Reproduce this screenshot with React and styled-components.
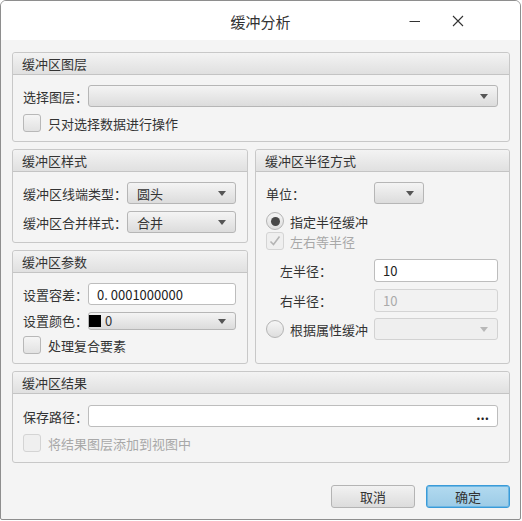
import React from 'react';
import styled, { createGlobalStyle } from 'styled-components';

const GlobalStyle = createGlobalStyle`
  body {
    margin: 0;
    background: #fff;
    font-family: "Noto Sans CJK SC", "Noto Sans", sans-serif;
    font-size: 13px;
    color: #333;
  }
`;

const Window = styled.div`
  box-sizing: border-box;
  width: 521px;
  height: 520px;
  border: 1px solid #8e8e8e;
  border-radius: 6px 6px 2px 2px;
  overflow: hidden;
  display: flex;
  flex-direction: column;
  background: #f4f4f4;
`;

const TitleBar = styled.div`
  height: 39px;
  background: #fff;
  display: grid;
  grid-template-columns: 1fr auto 1fr;
  align-items: center;
`;

const Title = styled.div`
  grid-column: 2;
  font-size: 15px;
  color: #333;
  padding-top: 1px;
`;

const Controls = styled.div`
  grid-column: 3;
  justify-self: end;
  display: flex;
  padding-right: 41px;
`;

const ControlButton = styled.div`
  width: 43px;
  height: 39px;
  display: flex;
  align-items: center;
  justify-content: center;
  color: #333;
`;

const Content = styled.div`
  flex: 1;
  display: flex;
  flex-direction: column;
  gap: 7px;
  padding: 12px 10px 0 11px;
`;

const Columns = styled.div`
  display: grid;
  grid-template-columns: 236px 1fr;
  gap: 7px;
`;

const Stack = styled.div`
  display: flex;
  flex-direction: column;
  gap: 7px;
`;

const Panel = styled.div`
  border: 1px solid #c8c8c8;
  border-radius: 3px;
  background: #f4f4f4;
  display: flex;
  flex-direction: column;
`;

const PanelHeader = styled.div`
  height: 21px;
  line-height: 21px;
  padding-left: 9px;
  border-bottom: 1px solid #c4c4c4;
  border-radius: 3px 3px 0 0;
  background: linear-gradient(#f3f3f3, #e0e0e0);
  color: #333;
`;

const PanelBody = styled.div`
  display: flex;
  flex-direction: column;
  gap: ${(p) => p.$gap ?? 7}px;
  padding: ${(p) => p.$top ?? 10}px 11px ${(p) => p.$bottom ?? 9}px 10px;
`;

const Row = styled.div`
  display: flex;
  align-items: center;
  height: ${(p) => p.$h ?? 22}px;
  margin-top: ${(p) => p.$mt ?? 0}px;
`;

const Label = styled.div`
  width: ${(p) => p.$w}px;
  flex: none;
  padding-left: ${(p) => p.$indent ?? 0}px;
  box-sizing: border-box;
  color: #333;
  white-space: nowrap;
`;

const OptionCell = styled.div`
  width: ${(p) => p.$w}px;
  flex: none;
  display: flex;
  align-items: center;
`;

const Combo = styled.div`
  box-sizing: border-box;
  position: relative;
  width: ${(p) => (p.$w ? `${p.$w}px` : 'auto')};
  flex: ${(p) => (p.$w ? 'none' : '1')};
  height: ${(p) => p.$h ?? 22}px;
  border: 1px solid ${(p) => (p.$disabled ? '#d2d2d2' : '#b6b6b6')};
  border-radius: 3px;
  background: ${(p) =>
    p.$disabled ? '#efefef' : 'linear-gradient(#f4f4f4, #dcdcdc)'};
  display: flex;
  align-items: center;
  padding-left: ${(p) => p.$pad ?? 9}px;
  color: #333;
  gap: 4px;

  &::after {
    content: '';
    position: absolute;
    right: 9px;
    top: 50%;
    margin-top: -2px;
    border-left: 4.5px solid transparent;
    border-right: 4.5px solid transparent;
    border-top: 5px solid ${(p) => (p.$disabled ? '#b8b8b8' : '#555')};
  }
`;

const Swatch = styled.span`
  width: 12px;
  height: 12px;
  background: #000;
`;

const Field = styled.div`
  box-sizing: border-box;
  flex: 1;
  height: ${(p) => p.$h ?? 22}px;
  border: 1px solid ${(p) => (p.$disabled ? '#d4d4d4' : '#bdbdbd')};
  border-radius: 3px;
  background: ${(p) => (p.$disabled ? '#f2f2f2' : '#fff')};
  color: ${(p) => (p.$disabled ? '#aaa' : '#222')};
  display: flex;
  align-items: center;
  justify-content: space-between;
  padding: 0 8px;
`;

const Dots = styled.span`
  font-weight: bold;
  letter-spacing: 0;
  color: #222;
  margin-top: -4px;
`;

const Check = styled.span`
  box-sizing: border-box;
  width: 18px;
  height: 18px;
  flex: none;
  border: 1px solid ${(p) => (p.$disabled ? '#d4d4d4' : '#b8b8b8')};
  border-radius: 3px;
  background: ${(p) =>
    p.$disabled ? '#efefef' : 'linear-gradient(#f5f5f5, #e2e2e2)'};
  display: flex;
  align-items: center;
  justify-content: center;
`;

const Radio = styled.span`
  box-sizing: border-box;
  width: 18px;
  height: 18px;
  flex: none;
  border: 1px solid #b4b4b4;
  border-radius: 50%;
  background: linear-gradient(#f6f6f6, #dedede);
  display: flex;
  align-items: center;
  justify-content: center;

  &::after {
    content: '';
    display: ${(p) => (p.$checked ? 'block' : 'none')};
    width: 9px;
    height: 9px;
    border-radius: 50%;
    background: #484848;
  }
`;

const OptionText = styled.span`
  margin-left: ${(p) => p.$gap ?? 7}px;
  color: ${(p) => (p.$disabled ? '#a8a8a8' : '#333')};
  white-space: nowrap;
`;

const Footer = styled.div`
  display: flex;
  justify-content: flex-end;
  gap: 11px;
  padding: 0 10px 11px 0;
`;

const Button = styled.div`
  box-sizing: border-box;
  width: 84px;
  height: 23px;
  border-radius: 3px;
  display: flex;
  align-items: center;
  justify-content: center;
  color: #333;
  border: 1px solid ${(p) => (p.$primary ? '#3a9bd8' : '#b4b4b4')};
  background: ${(p) =>
    p.$primary ? 'linear-gradient(#b2daf0, #9ccbe6)' : 'linear-gradient(#f2f2f2, #dcdcdc)'};
  box-shadow: ${(p) => (p.$primary ? 'inset 0 0 0 1px #6db7e4' : 'none')};
`;

const CheckMark = () => (
  <svg width="14" height="14" viewBox="0 0 14 14">
    <path d="M2.5 7.5 L5.5 10.5 L11.5 2.5" fill="none" stroke="#b4b4b4" strokeWidth="1.6" />
  </svg>
);

const Checkbox = ({ label, disabled, checked }) => (
  <Row $h={18}>
    <Check $disabled={disabled}>{checked && <CheckMark />}</Check>
    <OptionText $disabled={disabled}>{label}</OptionText>
  </Row>
);

export default function App() {
  return (
    <>
      <GlobalStyle />
      <Window>
        <TitleBar>
          <Title>缓冲分析</Title>
          <Controls>
            <ControlButton>
              <svg width="12" height="12" viewBox="0 0 12 12">
                <path d="M0.5 6.5 H11" stroke="#333" strokeWidth="1" />
              </svg>
            </ControlButton>
            <ControlButton>
              <svg width="12" height="12" viewBox="0 0 12 12">
                <path d="M1 1 L11 11 M11 1 L1 11" stroke="#333" strokeWidth="1.1" />
              </svg>
            </ControlButton>
          </Controls>
        </TitleBar>

        <Content>
          <Panel>
            <PanelHeader>缓冲区图层</PanelHeader>
            <PanelBody>
              <Row>
                <Label $w={65}>选择图层：</Label>
                <Combo />
              </Row>
              <Checkbox label="只对选择数据进行操作" />
            </PanelBody>
          </Panel>

          <Columns>
            <Stack>
              <Panel>
                <PanelHeader>缓冲区样式</PanelHeader>
                <PanelBody>
                  <Row>
                    <Label $w={104}>缓冲区线端类型：</Label>
                    <Combo $w={109}>圆头</Combo>
                  </Row>
                  <Row>
                    <Label $w={104}>缓冲区合并样式：</Label>
                    <Combo $w={109}>合并</Combo>
                  </Row>
                </PanelBody>
              </Panel>

              <Panel>
                <PanelHeader>缓冲区参数</PanelHeader>
                <PanelBody>
                  <Row>
                    <Label $w={65}>设置容差：</Label>
                    <Field>0. 0001000000</Field>
                  </Row>
                  <Row $h={17}>
                    <Label $w={65}>设置颜色：</Label>
                    <Combo $h={18} $pad={0}>
                      <Swatch />
                      0
                    </Combo>
                  </Row>
                  <Checkbox label="处理复合要素" />
                </PanelBody>
              </Panel>
            </Stack>

            <Panel>
              <PanelHeader>缓冲区半径方式</PanelHeader>
              <PanelBody $gap={0}>
                <Row>
                  <Label $w={108}>单位：</Label>
                  <Combo $w={50} />
                </Row>
                <Row $h={18} $mt={8}>
                  <Radio $checked />
                  <OptionText $gap={6}>指定半径缓冲</OptionText>
                </Row>
                <Row $h={18} $mt={2}>
                  <Check $disabled>
                    <CheckMark />
                  </Check>
                  <OptionText $gap={6} $disabled>左右等半径</OptionText>
                </Row>
                <Row $h={23} $mt={9}>
                  <Label $w={108} $indent={14}>左半径：</Label>
                  <Field $h={23}>10</Field>
                </Row>
                <Row $h={23} $mt={7}>
                  <Label $w={108} $indent={14}>右半径：</Label>
                  <Field $h={23} $disabled>10</Field>
                </Row>
                <Row $mt={6}>
                  <OptionCell $w={108}>
                    <Radio />
                    <OptionText $gap={6}>根据属性缓冲</OptionText>
                  </OptionCell>
                  <Combo $disabled />
                </Row>
              </PanelBody>
            </Panel>
          </Columns>

          <Panel>
            <PanelHeader>缓冲区结果</PanelHeader>
            <PanelBody $top={11} $bottom={10}>
              <Row>
                <Label $w={65}>保存路径：</Label>
                <Field>
                  <span />
                  <Dots>...</Dots>
                </Field>
              </Row>
              <Checkbox label="将结果图层添加到视图中" disabled />
            </PanelBody>
          </Panel>
        </Content>

        <Footer>
          <Button>取消</Button>
          <Button $primary>确定</Button>
        </Footer>
      </Window>
    </>
  );
}
